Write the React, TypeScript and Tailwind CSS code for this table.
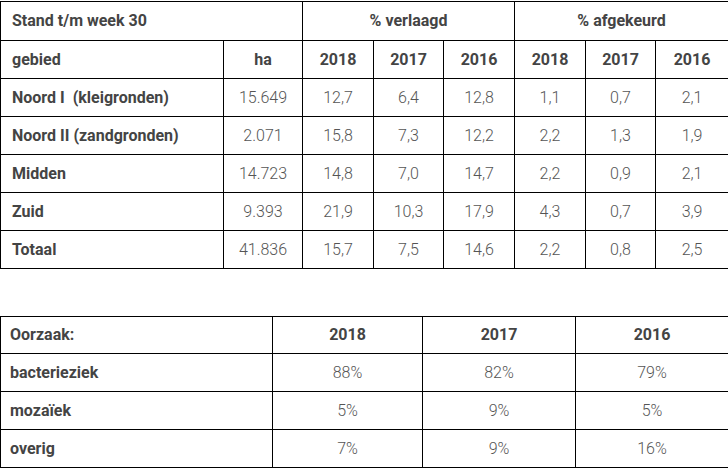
const rows = [
  { gebied: "Noord I\u00a0 (kleigronden)", ha: "15.649", v: ["12,7", "6,4", "12,8"], a: ["1,1", "0,7", "2,1"] },
  { gebied: "Noord II (zandgronden)", ha: "2.071", v: ["15,8", "7,3", "12,2"], a: ["2,2", "1,3", "1,9"] },
  { gebied: "Midden", ha: "14.723", v: ["14,8", "7,0", "14,7"], a: ["2,2", "0,9", "2,1"] },
  { gebied: "Zuid", ha: "9.393", v: ["21,9", "10,3", "17,9"], a: ["4,3", "0,7", "3,9"] },
  { gebied: "Totaal", ha: "41.836", v: ["15,7", "7,5", "14,6"], a: ["2,2", "0,8", "2,5"] },
];

const oorzaken = [
  { naam: "bacterieziek", w: ["88%", "82%", "79%"] },
  { naam: "mozaïek", w: ["5%", "9%", "5%"] },
  { naam: "overig", w: ["7%", "9%", "16%"] },
];

const years = ["2018", "2017", "2016"];

export default function App() {
  return (
    <div className="w-[728px] h-[470px] bg-white pt-px text-[16px] text-[#444]" style={{ fontFamily: "Roboto, 'Liberation Sans', sans-serif" }}>
      <table className="w-[728px] table-fixed border-collapse">
        <colgroup>
          <col className="w-[223px]" />
          <col className="w-[79px]" />
          <col className="w-[71px]" />
          <col className="w-[70px]" />
          <col className="w-[71px]" />
          <col className="w-[71px]" />
          <col className="w-[70px]" />
          <col className="w-[73px]" />
        </colgroup>
        <tbody>
          <tr className="h-[39px]">
            <td colSpan={2} className="border border-black px-[11px] font-bold">Stand t/m week 30</td>
            <td colSpan={3} className="border border-black text-center font-bold">% verlaagd</td>
            <td colSpan={3} className="border border-black text-center font-bold">% afgekeurd</td>
          </tr>
          <tr className="h-[38px]">
            <td className="border border-black px-[11px] font-bold">gebied</td>
            <td className="border border-black text-center font-bold">ha</td>
            {[...years, ...years].map((y, i) => (
              <td key={i} className="border border-black text-center font-bold">{y}</td>
            ))}
          </tr>
          {rows.map((r) => (
            <tr key={r.gebied} className="h-[38px]">
              <td className="border border-black px-[11px] font-bold whitespace-pre">{r.gebied}</td>
              <td className="border border-black text-center font-light text-[#555]">{r.ha}</td>
              {[...r.v, ...r.a].map((n, i) => (
                <td key={i} className="border border-black text-center font-light text-[#555]">{n}</td>
              ))}
            </tr>
          ))}
        </tbody>
      </table>

      <table className="mt-[47px] w-[728px] table-fixed border-collapse">
        <colgroup>
          <col className="w-[272px]" />
          <col className="w-[150px]" />
          <col className="w-[153px]" />
          <col className="w-[153px]" />
        </colgroup>
        <tbody>
          <tr className="h-[37px]">
            <td className="border border-black px-[9px] font-bold">Oorzaak:</td>
            {years.map((y) => (
              <td key={y} className="border border-black text-center font-bold">{y}</td>
            ))}
          </tr>
          {oorzaken.map((o) => (
            <tr key={o.naam} className="h-[38px]">
              <td className="border border-black px-[9px] font-bold">{o.naam}</td>
              {o.w.map((n, i) => (
                <td key={i} className="border border-black text-center font-light text-[#555]">{n}</td>
              ))}
            </tr>
          ))}
        </tbody>
      </table>
    </div>
  );
}
